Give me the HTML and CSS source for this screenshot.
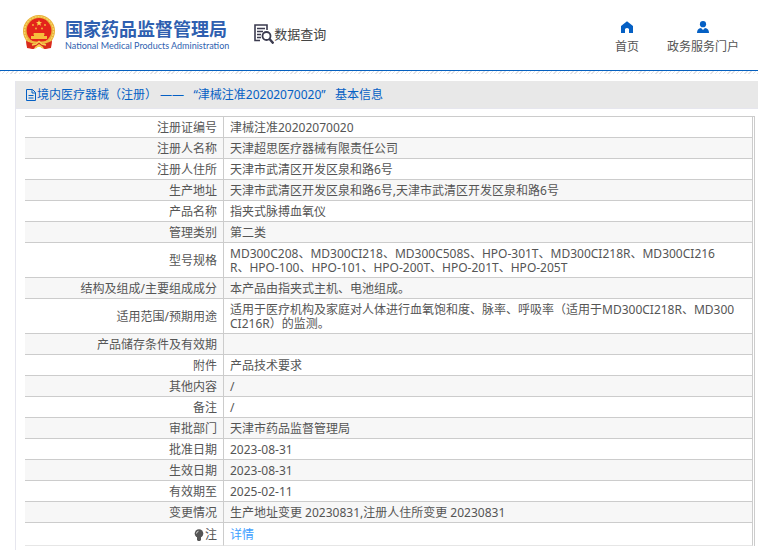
FILE: index.html
```html
<!DOCTYPE html>
<html lang="zh-CN">
<head>
<meta charset="utf-8">
<title>国家药品监督管理局 数据查询</title>
<link rel="stylesheet" href="styles.css">
</head>
<body>
<header class="top">
  <a class="brand" href="#">
    <svg class="emblem" viewBox="0 0 32 35" aria-hidden="true">
      <path d="M3 22 L4 33 L10 34 L16 31 L22 34 L28 33 L29 22Z" fill="#d92a1c"/>
      <circle cx="16" cy="16" r="16" fill="#e9b13a"/>
      <circle cx="16" cy="16" r="14.4" fill="none" stroke="#f8d465" stroke-width="1.4" stroke-dasharray="2 1"/>
      <circle cx="16" cy="15.5" r="12.4" fill="#e3241b"/>
      <path d="M16 5l.8 2.1 2.2.1-1.7 1.4.6 2.2-1.9-1.3-1.9 1.3.6-2.2L13 7.2l2.2-.1z" fill="#fbd54e"/>
      <g fill="#f6bd3c"><circle cx="10" cy="10" r=".9"/><circle cx="22" cy="10" r=".9"/><circle cx="13" cy="13.5" r=".9"/><circle cx="19" cy="13.5" r=".9"/>
      <path d="M11 18h10l1 1.500h-1V21h3v3H8v-3h3v-1.500h-1z"/></g>
      <path d="M5 25q11 3.500 22 0l-2 4q-9 3.500-18 0z" fill="#efb940"/>
      <path d="M3 26l8 3 5-2 5 2 8-3-1 6-6 2-6-3-6 3-6-2z" fill="#d92a1c"/>
      <path d="M9 30l4-1 3-2.500 3 2.500 4 1M12 33l4-3 4 3" fill="none" stroke="#f8cf55" stroke-width="1.6"/>
    </svg>
    <span class="names"><strong class="zh">国家药品监督管理局</strong><span class="en">National Medical Products Administration</span></span>
  </a>
  <a class="query" href="#">
    <svg class="queryicon" viewBox="0 0 20 20" aria-hidden="true" fill="none" stroke="#3b3b4f">
      <path d="M6 16.500H1V1h12v5" stroke-width="1.6"/>
      <path d="M3 4.500h8M3 7.500h6M3 10.500h4M3 13.500h4" stroke-width="1.4"/>
      <circle cx="12.5" cy="12" r="4" stroke-width="1.8"/><path d="M15.500 15l4 4.500" stroke-width="2.4"/>
    </svg>数据查询</a>
  <nav class="links">
    <a href="#"><svg viewBox="0 0 12 12" aria-hidden="true"><path d="M6 .3L0 5v7h4V8q2-2 4 0v4h4V5z"/></svg>首页</a>
    <a href="#"><svg viewBox="0 0 12 12" aria-hidden="true"><circle cx="6" cy="3.2" r="3.1"/><path d="M0 12q0-4.500 4-5l2 2 2-2q4 .5 4 5z"/></svg>政务服务门户</a>
  </nav>
</header>
<div class="hatch"></div>
<main class="panel">
  <h1 class="title"><svg class="doc" viewBox="0 0 11 12" aria-hidden="true"><path d="M1 .5h6l3 3v8H1zM6.500.5v3.500H10M3 6.500h5M3 9h5"/></svg>境内医疗器械（注册） ——&nbsp;&nbsp; “津械注准20202070020”&nbsp;&nbsp; 基本信息</h1>
  <div class="content">
  <table class="info">
    <tr><th scope="row">注册证编号</th><td>津械注准20202070020</td></tr>
    <tr><th scope="row">注册人名称</th><td>天津超思医疗器械有限责任公司</td></tr>
    <tr><th scope="row">注册人住所</th><td>天津市武清区开发区泉和路6号</td></tr>
    <tr><th scope="row">生产地址</th><td>天津市武清区开发区泉和路6号,天津市武清区开发区泉和路6号</td></tr>
    <tr><th scope="row">产品名称</th><td>指夹式脉搏血氧仪</td></tr>
    <tr><th scope="row">管理类别</th><td>第二类</td></tr>
    <tr><th scope="row">型号规格</th><td>MD300C208、MD300CI218、MD300C508S、HPO-301T、MD300CI218R、MD300CI216<br>R、HPO-100、HPO-101、HPO-200T、HPO-201T、HPO-205T</td></tr>
    <tr><th scope="row">结构及组成/主要组成成分</th><td>本产品由指夹式主机、电池组成。</td></tr>
    <tr><th scope="row">适用范围/预期用途</th><td>适用于医疗机构及家庭对人体进行血氧饱和度、脉率、呼吸率（适用于MD300CI218R、MD300<br>CI216R）的监测。</td></tr>
    <tr><th scope="row">产品储存条件及有效期</th><td></td></tr>
    <tr><th scope="row">附件</th><td>产品技术要求</td></tr>
    <tr><th scope="row">其他内容</th><td>/</td></tr>
    <tr><th scope="row">备注</th><td>/</td></tr>
    <tr><th scope="row">审批部门</th><td>天津市药品监督管理局</td></tr>
    <tr><th scope="row">批准日期</th><td>2023-08-31</td></tr>
    <tr><th scope="row">生效日期</th><td>2023-08-31</td></tr>
    <tr><th scope="row">有效期至</th><td>2025-02-11</td></tr>
    <tr><th scope="row">变更情况</th><td>生产地址变更 20230831,注册人住所变更 20230831</td></tr>
    <tr class="note"><th scope="row"><svg class="bulb" viewBox="0 0 10 12" aria-hidden="true"><circle cx="5" cy="4.5" r="4.3"/><path d="M3 8h4v3l-1 1H4l-1-1z"/><path class="shine" d="M2.500 4.500q.2-2 2-2.300"/></svg>注</th><td><a href="#">详情</a></td></tr>
  </table>
  </div>
</main>
</body>
</html>
```
FILE: styles.css
```css
* { box-sizing: border-box; }
body {
  margin: 0;
  background: #fff;
  color: #555;
  font: 12px/14px "Noto Sans", "Noto Sans CJK SC", sans-serif;
}
a { color: inherit; text-decoration: none; }
.top {
  display: flex;
  align-items: flex-start;
  height: 71px;
  padding: 15px 19px 0 23px;
  border-bottom: 1px solid #0560bf;
}
.hatch {
  height: 3px;
  background: repeating-linear-gradient(135deg, #e2e2e6 0 1px, #fff 1px 3px);
}
.brand { display: flex; gap: 10px; color: #2f5fb0; }
.emblem { width: 32px; height: 35px; }
.names { display: flex; flex-direction: column; padding-top: 3px; }
.zh { font: 700 18px/21px "Noto Sans CJK SC", sans-serif; }
.en { font: 9px/14px Lato, sans-serif; white-space: nowrap; }
.query {
  display: flex;
  align-items: center;
  margin: 9px 0 0 25px;
  color: #444;
  font-size: 13px;
  line-height: 20px;
}
.queryicon { width: 20px; height: 20px; }
.links { display: flex; gap: 28px; margin: 6px 0 0 auto; }
.links a { display: flex; flex-direction: column; align-items: center; gap: 7px; }
.links svg { width: 12px; height: 12px; fill: #0560c4; }
.panel {
  margin: 7px 0 0 15px;
  border-left: 1px solid #e6e6ee;
}
.title {
  display: flex;
  align-items: center;
  margin: 0;
  height: 28px;
  padding: 1px 0 0 9px;
  border-bottom: 1px solid #e6e6ee;
  background: #e8e8e8;
  color: #0560c4;
  font-size: 12px;
  font-weight: 400;
}
.doc { width: 12px; height: 12px; fill: none; stroke: currentColor; }
.content { padding: 7px 3px 4px 9px; }
.info {
  width: 100%;
  border-collapse: separate;
  border-spacing: 0;
  border-top: 1px solid #ccc;
  border-right: 1px solid #ccc;
  padding-right: 1px;
}
.info th, .info td {
  height: 21px;
  padding: 4px 6px 2px;
  border-right: 1px solid #ccc;
  border-bottom: 1px solid #ccc;
  font-weight: 400;
}
.info th { width: 199px; text-align: right; }
.info td { text-align: left; }
.info tr:nth-child(even) { background: #f7f7f7; }
.info .note th, .info .note td { height: 23px; border-bottom-color: #e6e6e6; }
.note a { color: #409eff; }
.bulb { width: 10px; height: 12px; margin-right: 1px; vertical-align: -2px; fill: #555; }
.shine { fill: none; stroke: #ddd; }
```
